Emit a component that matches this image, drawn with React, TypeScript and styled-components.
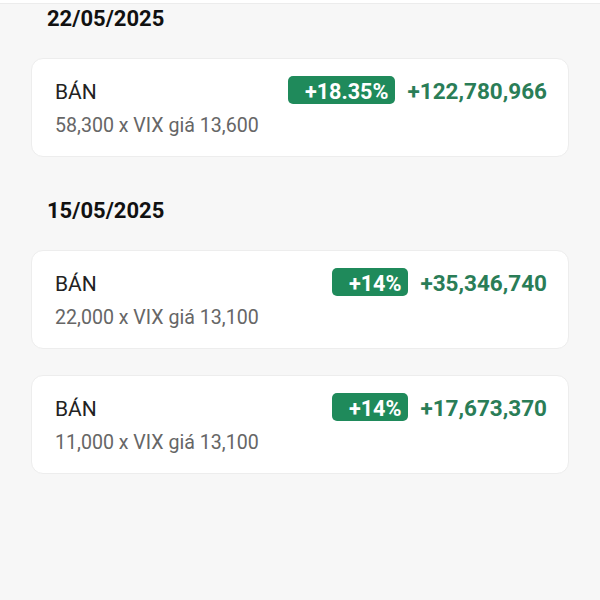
import React from "react";
import styled, { createGlobalStyle } from "styled-components";

const Global = createGlobalStyle`
  html, body { margin: 0; padding: 0; background: #f7f7f7; }
  body { font-family: Roboto, "Noto Sans", "Liberation Sans", sans-serif; }
`;

const Page = styled.div`
  width: 600px;
  height: 600px;
  background: #f7f7f7;
  box-sizing: border-box;
  overflow: hidden;
`;

const TopStrip = styled.div`
  height: 3px;
  background: #ffffff;
  border-bottom: 1px solid #ececec;
`;

const Content = styled.div`
  display: flex;
  flex-direction: column;
  gap: 41px;
  padding: 2px 31px 0 31px;
`;

const Section = styled.section`
  display: flex;
  flex-direction: column;
`;

const DateTitle = styled.div`
  font-size: 22px;
  line-height: 26px;
  font-weight: 700;
  color: #111111;
  padding-left: 16px;
  margin-bottom: 26px;
`;

const CardList = styled.div`
  display: flex;
  flex-direction: column;
  gap: 26px;
`;

const Card = styled.div`
  background: #ffffff;
  border: 1px solid #ededed;
  border-radius: 12px;
  padding: 17px 21px 18px 23px;
  display: flex;
  flex-direction: column;
  gap: 10px;
`;

const TopRow = styled.div`
  display: flex;
  align-items: center;
  height: 28px;
`;

const Side = styled.div`
  flex: 1;
  font-size: 21px;
  line-height: 28px;
  color: #222222;
  margin-top: 3px;
`;

const Badge = styled.div`
  box-sizing: border-box;
  height: 28px;
  padding: 3px 7px 0 17px;
  line-height: 25px;
  font-size: 21.6px;
  font-weight: 700;
  color: #ffffff;
  background: #1f8a5b;
  border-radius: 5px;
`;

const Amount = styled.div`
  margin-left: 12px;
  margin-top: 1px;
  font-size: 22.5px;
  line-height: 28px;
  font-weight: 700;
  color: #2a7d57;
`;

const Detail = styled.div`
  font-size: 19.6px;
  line-height: 24px;
  color: #666666;
`;

type Trade = { qty: string; price: string; pct: string; amount: string };

const sections: { date: string; trades: Trade[] }[] = [
  {
    date: "22/05/2025",
    trades: [{ qty: "58,300", price: "13,600", pct: "+18.35%", amount: "+122,780,966" }],
  },
  {
    date: "15/05/2025",
    trades: [
      { qty: "22,000", price: "13,100", pct: "+14%", amount: "+35,346,740" },
      { qty: "11,000", price: "13,100", pct: "+14%", amount: "+17,673,370" },
    ],
  },
];

export default function App() {
  return (
    <Page>
      <Global />
      <TopStrip />
      <Content>
        {sections.map((s) => (
          <Section key={s.date}>
            <DateTitle>{s.date}</DateTitle>
            <CardList>
              {s.trades.map((t, i) => (
                <Card key={i}>
                  <TopRow>
                    <Side>BÁN</Side>
                    <Badge>{t.pct}</Badge>
                    <Amount>{t.amount}</Amount>
                  </TopRow>
                  <Detail>
                    {t.qty} x VIX giá {t.price}
                  </Detail>
                </Card>
              ))}
            </CardList>
          </Section>
        ))}
      </Content>
    </Page>
  );
}
